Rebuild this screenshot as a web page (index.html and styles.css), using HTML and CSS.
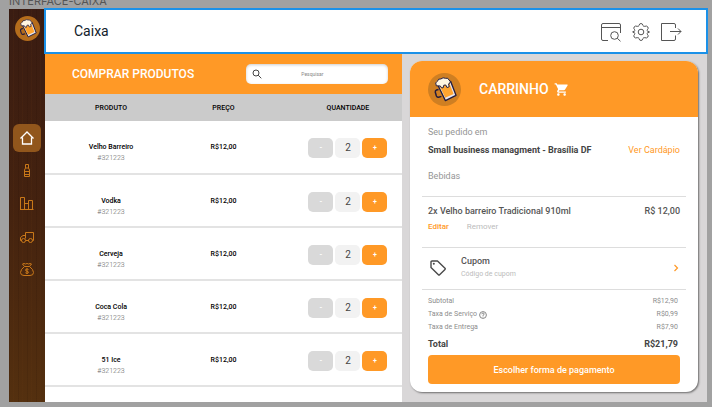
FILE: index.html
```html
<!DOCTYPE html>
<html lang="pt-BR">
<head>
<meta charset="utf-8">
<title>Caixa</title>
<link rel="stylesheet" href="styles.css">
</head>
<body>
<svg class="defs" aria-hidden="true">
  <symbol id="beer" viewBox="0 0 33 33">
    <g stroke="#221c3d" stroke-width="1.3" stroke-linejoin="round">
      <path d="M10.500 16.500 L8.500 17 Q7 17.600 7.300 19.300 L8.400 23 Q9 24.600 10.600 24.200 L13.400 23.400" fill="none" stroke-width="1.500"/>
      <path d="M10.200 12.800 L22.600 8.300 L28 22.300 L17.400 27.600 Z" fill="#e8e5ee"/>
      <path d="M12 13.800 L21.300 10 L25.600 21.100 L17.200 24.800 Z" fill="#ffa530" stroke="none"/>
      <path d="M8.300 12.800 Q6.500 9.500 9.500 8.100 Q10 5.500 13 5.900 Q15 4 17.400 5.300 Q20.300 4.500 21 7 Q22.900 8 22 10 L20.600 10.800 L21.200 13.800 L18.900 14.500 L17.800 12 L15.800 12.200 L15 15 L13.200 14.500 L12.400 13 Z" fill="#fff6e2" stroke-width="1"/>
    </g>
  </symbol>
</svg>
<p class="frame-label">INTERFACE-CAIXA</p>
<div class="frame">
  <aside class="sidebar">
    <svg class="logo" viewBox="0 0 33 33"><circle cx="16.500" cy="16.500" r="16.500" fill="#b56d1c"/><use href="#beer"/></svg>
    <nav class="menu">
      <a class="menu-link active" href="#" aria-label="Início"><svg width="16" height="16" viewBox="0 0 16 16"><path d="M1.500 8.500 L8 2 L14.500 8.500 M3.500 7.500 V14 H12.500 V7.500"/></svg></a>
      <a class="menu-link" href="#" aria-label="Bebidas"><svg width="16" height="16" viewBox="0 0 16 16"><path d="M6.500 5 V1.500 H9.500 V5 L10.500 7 V13.500 H5.500 V7 Z M6.500 5 H9.500 M5.500 8.500 H10.500 M5.500 11.500 H10.500"/></svg></a>
      <a class="menu-link" href="#" aria-label="Relatórios"><svg width="16" height="16" viewBox="0 0 16 16"><path d="M1.500 13.500 V1.500 H5.500 V13.500 M5.500 7.500 H9.500 V13.500 M9.500 13.500 V4.500 H13.500 V13.500 M1 13.500 H14.500"/></svg></a>
      <a class="menu-link" href="#" aria-label="Entregas"><svg width="16" height="16" viewBox="0 0 16 16"><path d="M6.500 9.500 V3.500 H14.500 V11.500 H13.500 M6.500 6.500 H4 L1.500 8.500 V11.500 H3 M6.500 11.500 H10"/><circle cx="4.500" cy="11.500" r="2"/><circle cx="11.500" cy="11.500" r="2"/></svg></a>
      <a class="menu-link" href="#" aria-label="Finanças"><svg width="16" height="16" viewBox="0 0 16 16"><path d="M5.500 4.500 L3.500 2 Q5 1 6.500 2 Q8 1 9.500 2 Q11 1 12.500 2 L10.500 4.500 Z M5.500 4.500 Q1.500 7.500 1.500 10.500 Q1.500 13.500 5 13.500 H11 Q14.500 13.500 14.500 10.500 Q14.500 7.500 10.500 4.500 M9.500 7.500 Q9 7 8 7 Q6.500 7 6.500 8 Q6.500 9 8 9.200 Q9.500 9.500 9.500 10.400 Q9.500 11.300 8 11.300 Q6.800 11.300 6.400 10.700 M8 6.200 V12"/></svg></a>
    </nav>
  </aside>
  <div class="main">
    <header class="topbar">
      <h1 class="page-title">Caixa</h1>
      <div class="tools">
        <button class="tool" aria-label="Consultar"><svg width="22" height="20" viewBox="0 0 22 20"><path d="M8 18.500 H3 Q1.500 18.500 1.500 17 V3 Q1.500 1.500 3 1.500 H19 Q20.500 1.500 20.500 3 V11 M1.500 5.500 H20.500"/><circle cx="14.500" cy="13.500" r="3.800"/><path d="M17.300 16.300 L20.500 19.300"/></svg></button>
        <button class="tool" aria-label="Configurações"><svg width="20" height="20" viewBox="0 0 20 20"><path d="M8 3.600 Q8.300 1.500 10 1.500 Q11.700 1.500 12 3.600 Q12.600 4.700 13.800 4.300 Q15.800 3.500 16.900 5 Q17.700 6.500 16.300 7.800 Q15.600 8.800 16.700 9.300 Q18.500 9.500 18.500 10 Q18.500 10.500 16.700 10.700 Q15.600 11.200 16.300 12.200 Q17.700 13.500 16.900 15 Q15.800 16.500 13.800 15.700 Q12.600 15.300 12 16.400 Q11.700 18.500 10 18.500 Q8.300 18.500 8 16.400 Q7.400 15.300 6.200 15.700 Q4.200 16.500 3.100 15 Q2.300 13.500 3.700 12.200 Q4.400 11.200 3.300 10.700 Q1.500 10.500 1.500 10 Q1.500 9.500 3.300 9.300 Q4.400 8.800 3.700 7.800 Q2.300 6.500 3.100 5 Q4.200 3.500 6.200 4.300 Q7.400 4.700 8 3.600 Z"/><circle cx="10" cy="10" r="2.800"/></svg></button>
        <button class="tool" aria-label="Sair"><svg width="22" height="20" viewBox="0 0 22 20"><path d="M15.500 6 V3 Q15.500 1.500 14 1.500 H1.500 V18.500 H14 Q15.500 18.500 15.500 17 V13.500 M10 9.500 H21 M18 6.500 L21 9.500 L18 12.500"/></svg></button>
      </div>
    </header>
    <div class="content">
      <section class="products">
        <div class="products-head">
          <h2 class="products-title">COMPRAR PRODUTOS</h2>
          <label class="search">
            <svg width="10" height="10" viewBox="0 0 10 10"><circle cx="4" cy="4" r="3"/><path d="M6.200 6.200 L9.300 9.300"/></svg>
            <input class="search-input" type="search" placeholder="Pesquisar" aria-label="Pesquisar">
          </label>
        </div>
        <table class="product-table">
          <thead><tr><th>PRODUTO</th><th>PREÇO</th><th>QUANTIDADE</th></tr></thead>
          <tbody>
            <tr><td><strong>Velho Barreiro</strong><span class="code">#321223</span></td><td class="price">R$12,00</td><td><div class="stepper"><button class="minus">-</button><output>2</output><button class="plus">+</button></div></td></tr>
            <tr><td><strong>Vodka</strong><span class="code">#321223</span></td><td class="price">R$12,00</td><td><div class="stepper"><button class="minus">-</button><output>2</output><button class="plus">+</button></div></td></tr>
            <tr><td><strong>Cerveja</strong><span class="code">#321223</span></td><td class="price">R$12,00</td><td><div class="stepper"><button class="minus">-</button><output>2</output><button class="plus">+</button></div></td></tr>
            <tr><td><strong>Coca Cola</strong><span class="code">#321223</span></td><td class="price">R$12,00</td><td><div class="stepper"><button class="minus">-</button><output>2</output><button class="plus">+</button></div></td></tr>
            <tr><td><strong>51 Ice</strong><span class="code">#321223</span></td><td class="price">R$12,00</td><td><div class="stepper"><button class="minus">-</button><output>2</output><button class="plus">+</button></div></td></tr>
          </tbody>
        </table>
      </section>
      <section class="cart-area">
        <div class="cart">
          <header class="cart-head">
            <svg class="cart-logo" viewBox="0 0 33 33"><circle cx="16.500" cy="16.500" r="16.500" fill="#cf7f22"/><use href="#beer"/></svg>
            <h2 class="cart-title">CARRINHO</h2>
            <svg class="cart-icon" width="15" height="15" viewBox="0 0 24 24"><path fill="#fff" d="M7 18c-1.100 0-2 .9-2 2s.9 2 2 2 2-.9 2-2-.9-2-2-2zM1 2v2h2l3.600 7.600L5.200 14c-.8 1.400.3 3 1.800 3h12v-2H7.400l1.100-2h7.500c.7 0 1.400-.4 1.700-1L21.700 5.500c.4-.7-.1-1.500-.9-1.500H5.200L4.300 2H1zm16 16c-1.100 0-2 .9-2 2s.9 2 2 2 2-.9 2-2-.9-2-2-2z"/></svg>
          </header>
          <div class="cart-body">
            <div class="block order">
              <p class="muted">Seu pedido em</p>
              <div class="row store"><strong>Small business managment - Brasília DF</strong><a class="accent" href="#">Ver Cardápio</a></div>
              <p class="muted">Bebidas</p>
            </div>
            <div class="block item">
              <div class="row item-name"><span>2x Velho barreiro Tradicional 910ml</span><span>R$ 12,00</span></div>
              <div class="item-actions"><button class="accent edit">Editar</button><button class="remove">Remover</button></div>
            </div>
            <div class="block coupon">
              <svg width="20" height="18" viewBox="0 0 20 18"><path d="M3 3 Q3 2 4 2 H9.500 L17 9.200 Q17.600 9.800 17 10.400 L11.600 15.800 Q11 16.400 10.400 15.800 L3 8.500 Z" fill="none" stroke="#4a4a4a" stroke-width="1.400" stroke-linejoin="round"/><circle cx="5.800" cy="4.800" r="1" fill="#4a4a4a"/></svg>
              <div class="coupon-text"><p class="coupon-name">Cupom</p><p class="coupon-hint">Código de cupom</p></div>
              <svg width="8" height="8" viewBox="0 0 8 8"><path d="M2.500 1 L5.500 4 L2.500 7" fill="none" stroke="#ff9926" stroke-width="1.200"/></svg>
            </div>
            <div class="block totals">
              <div class="row fee"><span>Subtotal</span><span>R$12,90</span></div>
              <div class="row fee"><span class="with-icon">Taxa de Serviço <svg width="8" height="8" viewBox="0 0 8 8"><circle cx="4" cy="4" r="3.400"/><path d="M2.800 3.200 Q2.800 2 4 2 Q5.200 2 5.200 3.100 Q5.200 3.700 4 4.300 V5 M4 5.600 V6.300"/></svg></span><span>R$0,99</span></div>
              <div class="row fee"><span>Taxa de Entrega</span><span>R$7,90</span></div>
              <div class="row total"><strong>Total</strong><strong>R$21,79</strong></div>
              <button class="pay">Escolher forma de pagamento</button>
            </div>
          </div>
        </div>
      </section>
    </div>
  </div>
</div>
</body>
</html>
```

FILE: styles.css
```css
* { box-sizing: border-box; margin: 0; padding: 0; }
body {
  display: flex;
  flex-direction: column;
  min-height: 100vh;
  padding: 0 5px 5px 9px;
  background: #a1a1a1;
  font-family: Roboto, sans-serif;
  font-size: 9px;
  line-height: 12px;
  color: #444;
}
button { border: 0; background: none; font: inherit; color: inherit; cursor: pointer; }
a { text-decoration: none; color: inherit; }
svg { display: block; flex: none; }
.defs { display: none; }
.frame-label {
  display: flex;
  align-items: flex-end;
  height: 9px;
  font: 11px/16px Inter, sans-serif;
  color: #555;
}
.frame { display: grid; grid-template-columns: 36px 1fr; flex: 1; }

/* Sidebar with wood grain */
.sidebar {
  display: flex;
  flex-direction: column;
  align-items: center;
  padding-top: 7px;
  background:
    repeating-linear-gradient(90deg, rgba(20, 5, 0, .1) 0 1px, transparent 1px 4px, rgba(110, 60, 20, .1) 4px 5px, transparent 5px 9px),
    linear-gradient(#3a1c12, #44220f 50%, #54300f);
}
.logo { width: 25px; height: 25px; }
.menu { display: grid; gap: 5px; margin-top: 83px; }
.menu-link { display: grid; place-items: center; width: 28px; height: 28px; border-radius: 6px; }
.menu-link svg { fill: none; stroke: #c97819; stroke-width: 1; }
.menu-link.active { background: #91561c; }
.menu-link.active svg { stroke: #fff; stroke-width: 1.3; }

.main { display: flex; flex-direction: column; min-width: 0; }
.topbar {
  position: relative;
  z-index: 1;
  display: flex;
  align-items: center;
  justify-content: space-between;
  height: 44px;
  padding: 0 25px 0 29px;
  background: #fff;
  outline: 2px solid #1b91e8;
  outline-offset: -1px;
}
.page-title { font-size: 14px; line-height: 20px; font-weight: 400; color: #10202a; }
.tools { display: flex; align-items: center; gap: 9px; padding-top: 1px; }
.tool svg { fill: none; stroke: #555; stroke-width: 1; }
.content { display: grid; grid-template-columns: 357fr 305fr; flex: 1; }

/* Product list */
.products { background: #fff; }
.products-head {
  display: flex;
  align-items: center;
  justify-content: space-between;
  height: 41px;
  padding: 1px 14px 0 27px;
  background: #ff9926;
}
.products-title { font-size: 12px; line-height: 16px; font-weight: 500; color: #fff; }
.search {
  display: flex;
  align-items: center;
  width: 45%;
  height: 20px;
  padding: 0 6px;
  border-radius: 5px;
  background: #fff;
  box-shadow: inset 0 1px 3px rgba(0, 0, 0, .2);
}
.search svg { fill: none; stroke: #444; stroke-width: 1; }
.search-input { flex: 1; min-width: 0; padding-right: 10px; border: 0; outline: 0; background: none; font: 5px/12px Roboto, sans-serif; text-align: center; }
.search-input::placeholder { color: #888; }
.product-table { width: 100%; border-collapse: collapse; table-layout: fixed; text-align: center; font-size: 7px; color: #000; }
.product-table th { height: 27px; background: #cbcbcb; font-weight: 500; vertical-align: middle; }
.product-table th:nth-child(1) { width: 37%; }
.product-table th:nth-child(2) { width: 26%; }
.product-table th:nth-child(3), .product-table td:nth-child(3) { padding-left: 24px; }
.product-table td { height: 53px; border-bottom: 2px solid #e3e3e3; vertical-align: middle; }
.product-table td:first-child { padding-top: 12px; line-height: 11px; }
.product-table strong, .code { display: block; }
.product-table strong, .price { font-weight: 500; }
.code { font-weight: 300; color: #666; }
.stepper { display: flex; justify-content: center; gap: 2px; padding-top: 2px; }
.stepper > * { width: 25px; height: 20px; border-radius: 5px; line-height: 20px; color: #fff; font-weight: 700; }
.stepper output { background: #f2f2f2; color: #444; font-size: 10px; font-weight: 400; }
.minus { background: #d9d9d9; }
.plus { background: #ff9926; }

/* Cart */
.cart-area { padding: 8px 9px 9px 8px; background: #d9d7d8; }
.cart { border-radius: 12px; overflow: hidden; background: #fff; box-shadow: 1px 1px 2px rgba(0, 0, 0, .5); }
.cart-head { display: flex; align-items: center; height: 56px; padding: 0 18px; background: #ff9926; color: #fff; }
.cart-logo { width: 33px; height: 33px; }
.cart-title { margin: 0 5px 0 18px; font-size: 14px; line-height: 20px; font-weight: 500; }
.cart-body { padding: 0 12px; }
.block { padding: 0 6px; border-bottom: 1px solid #ddd; }
.block:last-child { border-bottom: 0; }
.row { display: flex; justify-content: space-between; }
.muted { color: #959595; }
.accent { color: #ff9926; }
.order { padding-top: 9px; padding-bottom: 14px; }
.store { margin: 6px 0 14px; }
.store strong { font-weight: 700; }
.item { padding-top: 8px; padding-bottom: 14px; }
.item-name { font-weight: 500; color: #555; }
.item-actions { display: flex; gap: 18px; margin-top: 4px; font-size: 8px; }
.edit { font-weight: 500; }
.remove { color: #bbb; }
.coupon { display: flex; align-items: center; padding-top: 7px; padding-bottom: 9px; }
.coupon-text { flex: 1; display: grid; gap: 1px; margin-left: 13px; }
.coupon-name { font-weight: 500; color: #555; }
.coupon-hint { font-size: 7px; color: #bbb; }
.totals { padding-top: 5px; padding-bottom: 8px; }
.totals .row { padding-right: 2px; }
.fee { font-size: 7px; line-height: 13px; color: #8c8c8c; }
.with-icon { display: flex; align-items: center; gap: 2px; }
.with-icon svg { fill: none; stroke: #888; stroke-width: 1; }
.total { margin: 4px 0 5px; }
.pay { width: 100%; height: 29px; border-radius: 4px; background: #ff9926; color: #fff; font-weight: 500; }
```
